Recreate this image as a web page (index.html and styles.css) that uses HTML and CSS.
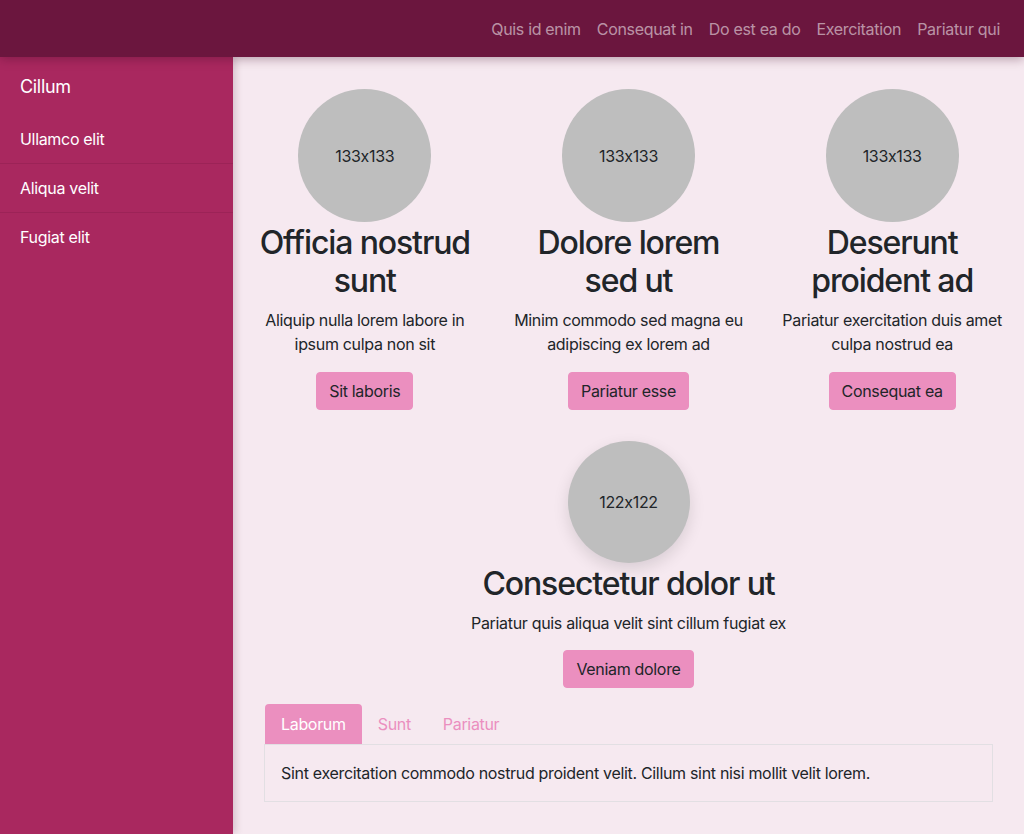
FILE: index.html
```html
<!DOCTYPE html>
<html lang="en">
<head>
<meta charset="utf-8">
<title>Cillum</title>
<link rel="stylesheet" href="styles.css">
</head>
<body>
<header class="navbar">
  <nav class="nav-links">
    <a href="#">Quis id enim</a>
    <a href="#">Consequat in</a>
    <a href="#">Do est ea do</a>
    <a href="#">Exercitation</a>
    <a href="#">Pariatur qui</a>
  </nav>
</header>
<div class="layout">
  <aside class="sidebar">
    <div class="sidebar-title">Cillum</div>
    <ul class="side-list">
      <li><a href="#">Ullamco elit</a></li>
      <li><a href="#">Aliqua velit</a></li>
      <li><a href="#">Fugiat elit</a></li>
    </ul>
  </aside>
  <main class="main">
    <section class="cards">
      <div class="card">
        <div class="avatar">133x133</div>
        <h2 class="card-title">Officia nostrud sunt</h2>
        <p class="card-text">Aliquip nulla lorem labore in ipsum culpa non sit</p>
        <button class="btn">Sit laboris</button>
      </div>
      <div class="card">
        <div class="avatar">133x133</div>
        <h2 class="card-title">Dolore lorem sed ut</h2>
        <p class="card-text">Minim commodo sed magna eu adipiscing ex lorem ad</p>
        <button class="btn">Pariatur esse</button>
      </div>
      <div class="card">
        <div class="avatar">133x133</div>
        <h2 class="card-title">Deserunt proident ad</h2>
        <p class="card-text">Pariatur exercitation duis amet culpa nostrud ea</p>
        <button class="btn">Consequat ea</button>
      </div>
    </section>
    <section class="feature">
      <div class="avatar avatar-sm">122x122</div>
      <h2 class="card-title">Consectetur dolor ut</h2>
      <p class="card-text">Pariatur quis aliqua velit sint cillum fugiat ex</p>
      <button class="btn">Veniam dolore</button>
    </section>
    <section class="tabs">
      <div class="tab-list">
        <a href="#" class="tab active">Laborum</a>
        <a href="#" class="tab">Sunt</a>
        <a href="#" class="tab">Pariatur</a>
      </div>
      <div class="tab-content">Sint exercitation commodo nostrud proident velit. Cillum sint nisi mollit velit lorem.</div>
    </section>
  </main>
</div>
</body>
</html>
```

FILE: styles.css
```css
* { box-sizing: border-box; }

html, body {
  margin: 0;
  padding: 0;
}

body {
  font-family: Inter, "Noto Sans", "Liberation Sans", sans-serif;
  font-feature-settings: "calt" 0;
  font-size: 16px;
  line-height: 24px;
  letter-spacing: -0.02em;
  color: #212529;
  background: #f6e9f0;
  height: 834px;
  overflow: hidden;
}

.navbar {
  position: relative;
  z-index: 3;
  height: 57px;
  background: #6b163e;
  display: flex;
  justify-content: flex-end;
  align-items: center;
  padding: 0 16px;
  box-shadow: 0 2px 10px rgba(60, 10, 35, 0.35);
}

.nav-links {
  display: flex;
}

.nav-links a {
  color: rgba(255, 255, 255, 0.55);
  text-decoration: none;
  padding: 8px 8px;
  line-height: 24px;
}

.layout {
  display: flex;
  height: 777px;
}

.sidebar {
  position: relative;
  z-index: 2;
  width: 233px;
  flex: 0 0 233px;
  background: #a9285f;
  box-shadow: 2px 0 8px rgba(60, 10, 35, 0.2);
}

.sidebar-title {
  color: #fff;
  font-size: 18px;
  line-height: 27px;
  padding: 16px 20px 0;
  margin-bottom: 15px;
}

.side-list {
  list-style: none;
  margin: 0;
  padding: 0;
}

.side-list li {
  border-bottom: 1px solid #9c2357;
}

.side-list li:last-child {
  border-bottom: none;
}

.side-list a {
  display: block;
  color: #fff;
  text-decoration: none;
  padding: 12px 20px;
  line-height: 24px;
}

.main {
  flex: 1;
  padding: 32px 0 0;
}

.cards {
  display: grid;
  grid-template-columns: repeat(3, 1fr);
}

.card {
  display: flex;
  flex-direction: column;
  align-items: center;
  text-align: center;
  padding: 0 15px;
}

.avatar {
  width: 133px;
  height: 133px;
  border-radius: 50%;
  background: #bebebe;
  display: flex;
  align-items: center;
  justify-content: center;
  font-size: 16px;
  color: #212529;
  margin-bottom: 2px;
}

.avatar-sm {
  width: 122px;
  height: 122px;
  box-shadow: 0 6px 16px rgba(0, 0, 0, 0.12);
}

.card-title {
  font-size: 32px;
  line-height: 38px;
  font-weight: 500;
  letter-spacing: -0.035em;
  margin: 0 0 8px;
  color: #212529;
}

.card-text {
  margin: 0 0 16px;
  font-size: 16px;
  line-height: 24px;
}

.btn {
  font-family: inherit;
  font-feature-settings: "calt" 0;
  letter-spacing: -0.02em;
  font-size: 16px;
  line-height: 24px;
  color: #212529;
  background: #eb8fbf;
  border: 1px solid #eb8fbf;
  border-radius: 4px;
  padding: 6px 12px;
}

.feature {
  display: flex;
  flex-direction: column;
  align-items: center;
  text-align: center;
  margin-top: 31px;
}

.feature .card-text {
  margin-bottom: 15px;
}

.tabs {
  margin: 16px 31px 0;
}

.tab-list {
  display: flex;
  padding-left: 1px;
}

.tab {
  display: block;
  padding: 8px 16px;
  line-height: 24px;
  color: #eb8fbf;
  text-decoration: none;
  border-radius: 4px 4px 0 0;
}

.tab.active {
  background: #eb8fbf;
  color: #fff;
}

.tab-content {
  border: 1px solid #e2dfe3;
  padding: 16px;
  line-height: 24px;
}
```
